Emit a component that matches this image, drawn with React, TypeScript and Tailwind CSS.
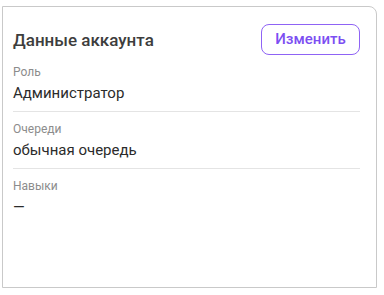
const rows = [
  { label: "Роль", value: "Администратор" },
  { label: "Очереди", value: "обычная очередь" },
  { label: "Навыки", value: "—" },
]

const App = () => {
  return (
    <div className="w-[384px] h-[295px] bg-white" style={{ fontFamily: "Roboto, 'Noto Sans', sans-serif" }}>
      {/* Card */}
      <div className="ml-[2px] mt-[6px] w-[375px] h-[282px] border border-[#c9c9c9] rounded-tr-lg bg-white pt-[17px] pl-[10px] pr-[16px]">
        <div className="flex items-center justify-between">
          <h1 className="text-[17px] leading-[22px] font-medium text-[#3d3d3d]">Данные аккаунта</h1>
          <button className="w-[99px] h-[31px] rounded-lg border border-[#8f63f5] text-[#7c4ef2] text-[15px] font-medium">
            Изменить
          </button>
        </div>
        {rows.map((r, i) => (
          <div
            key={r.label}
            className={"pt-[9px] pb-[8px] " + (i < rows.length - 1 ? "border-b border-[#e4e4e4]" : "")}
          >
            <div className="text-[12px] leading-[16px] text-[#8c8c8c]">{r.label}</div>
            <div className="mt-[3px] text-[15px] leading-[20px] text-[#2b2b2b]">{r.value}</div>
          </div>
        ))}
      </div>
    </div>
  )
}

export default App
